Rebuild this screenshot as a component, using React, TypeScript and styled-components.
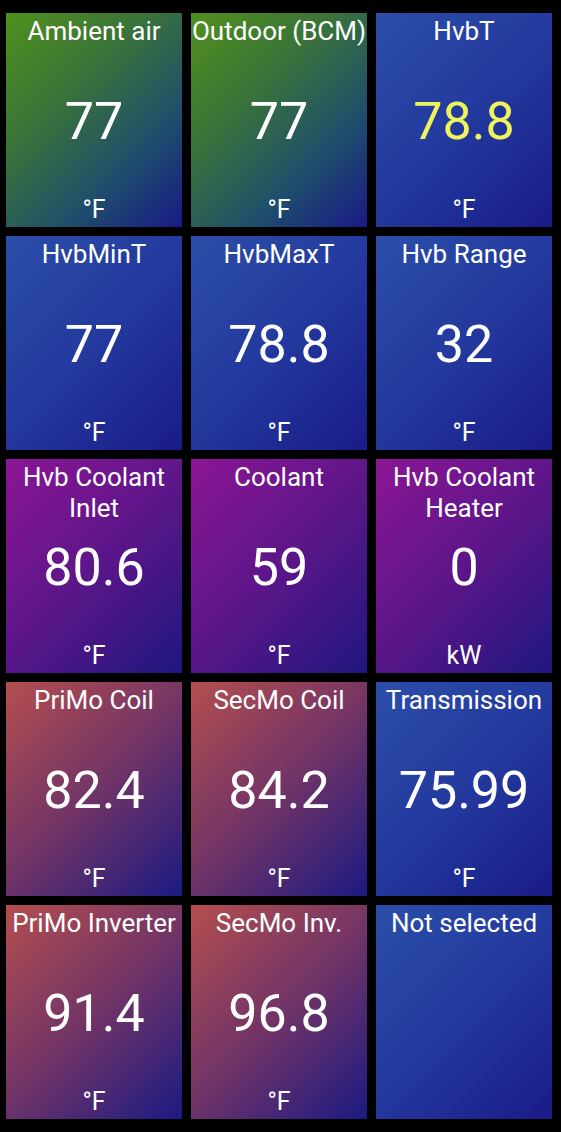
import React from "react";
import styled, { createGlobalStyle } from "styled-components";

const Global = createGlobalStyle`
  html, body { margin: 0; padding: 0; background: #000; }
  body { font-family: Roboto, "Noto Sans", "Liberation Sans", sans-serif; }
`;

type Tone = "green" | "blue" | "purple" | "red";

const gradients: Record<Tone, string> = {
  green: "linear-gradient(135deg, #50901c 0%, #3a7438 35%, #1e4e6c 70%, #1a1a86 100%)",
  blue: "linear-gradient(135deg, #2b4ea8 0%, #23399e 50%, #1a1b88 100%)",
  purple: "linear-gradient(135deg, #8c1594 0%, #5c1689 50%, #1f177e 100%)",
  red: "linear-gradient(135deg, #b44e4e 0%, #723466 50%, #1c1a82 100%)",
};

const Page = styled.div`
  box-sizing: border-box;
  width: 561px;
  height: 1132px;
  padding: 13px 9px 13px 6px;
  display: grid;
  grid-template-columns: repeat(3, 176px);
  grid-template-rows: repeat(5, 214px);
  gap: 9px;
  background: #000;
`;

const Tile = styled.div<{ $tone: Tone }>`
  background: ${(p) => gradients[p.$tone]};
  display: grid;
  grid-template-rows: 1fr auto 1fr;
  color: #fff;
  text-align: center;
  overflow: hidden;
`;

const Title = styled.div`
  align-self: start;
  font-size: 26px;
  line-height: 31px;
  padding-top: 3px;
  white-space: nowrap;
`;

const Value = styled.div<{ $highlight?: boolean }>`
  font-size: 52px;
  line-height: 60px;
  padding-top: 3px;
  color: ${(p) => (p.$highlight ? "#eef55a" : "#fff")};
`;

const Unit = styled.div`
  align-self: end;
  font-size: 25px;
  line-height: 28px;
  padding-bottom: 3px;
`;

type Item = {
  title: string[];
  value?: string;
  unit?: string;
  tone: Tone;
  highlight?: boolean;
};

const items: Item[] = [
  { title: ["Ambient air"], value: "77", unit: "°F", tone: "green" },
  { title: ["Outdoor (BCM)"], value: "77", unit: "°F", tone: "green" },
  { title: ["HvbT"], value: "78.8", unit: "°F", tone: "blue", highlight: true },
  { title: ["HvbMinT"], value: "77", unit: "°F", tone: "blue" },
  { title: ["HvbMaxT"], value: "78.8", unit: "°F", tone: "blue" },
  { title: ["Hvb Range"], value: "32", unit: "°F", tone: "blue" },
  { title: ["Hvb Coolant", "Inlet"], value: "80.6", unit: "°F", tone: "purple" },
  { title: ["Coolant"], value: "59", unit: "°F", tone: "purple" },
  { title: ["Hvb Coolant", "Heater"], value: "0", unit: "kW", tone: "purple" },
  { title: ["PriMo Coil"], value: "82.4", unit: "°F", tone: "red" },
  { title: ["SecMo Coil"], value: "84.2", unit: "°F", tone: "red" },
  { title: ["Transmission"], value: "75.99", unit: "°F", tone: "blue" },
  { title: ["PriMo Inverter"], value: "91.4", unit: "°F", tone: "red" },
  { title: ["SecMo Inv."], value: "96.8", unit: "°F", tone: "red" },
  { title: ["Not selected"], tone: "blue" },
];

export default function App() {
  return (
    <>
      <Global />
      <Page>
        {items.map((it, i) => (
          <Tile key={i} $tone={it.tone}>
            <Title>
              {it.title.map((l, j) => (
                <div key={j}>{l}</div>
              ))}
            </Title>
            <Value $highlight={it.highlight}>{it.value ?? ""}</Value>
            <Unit>{it.unit ?? ""}</Unit>
          </Tile>
        ))}
      </Page>
    </>
  );
}
